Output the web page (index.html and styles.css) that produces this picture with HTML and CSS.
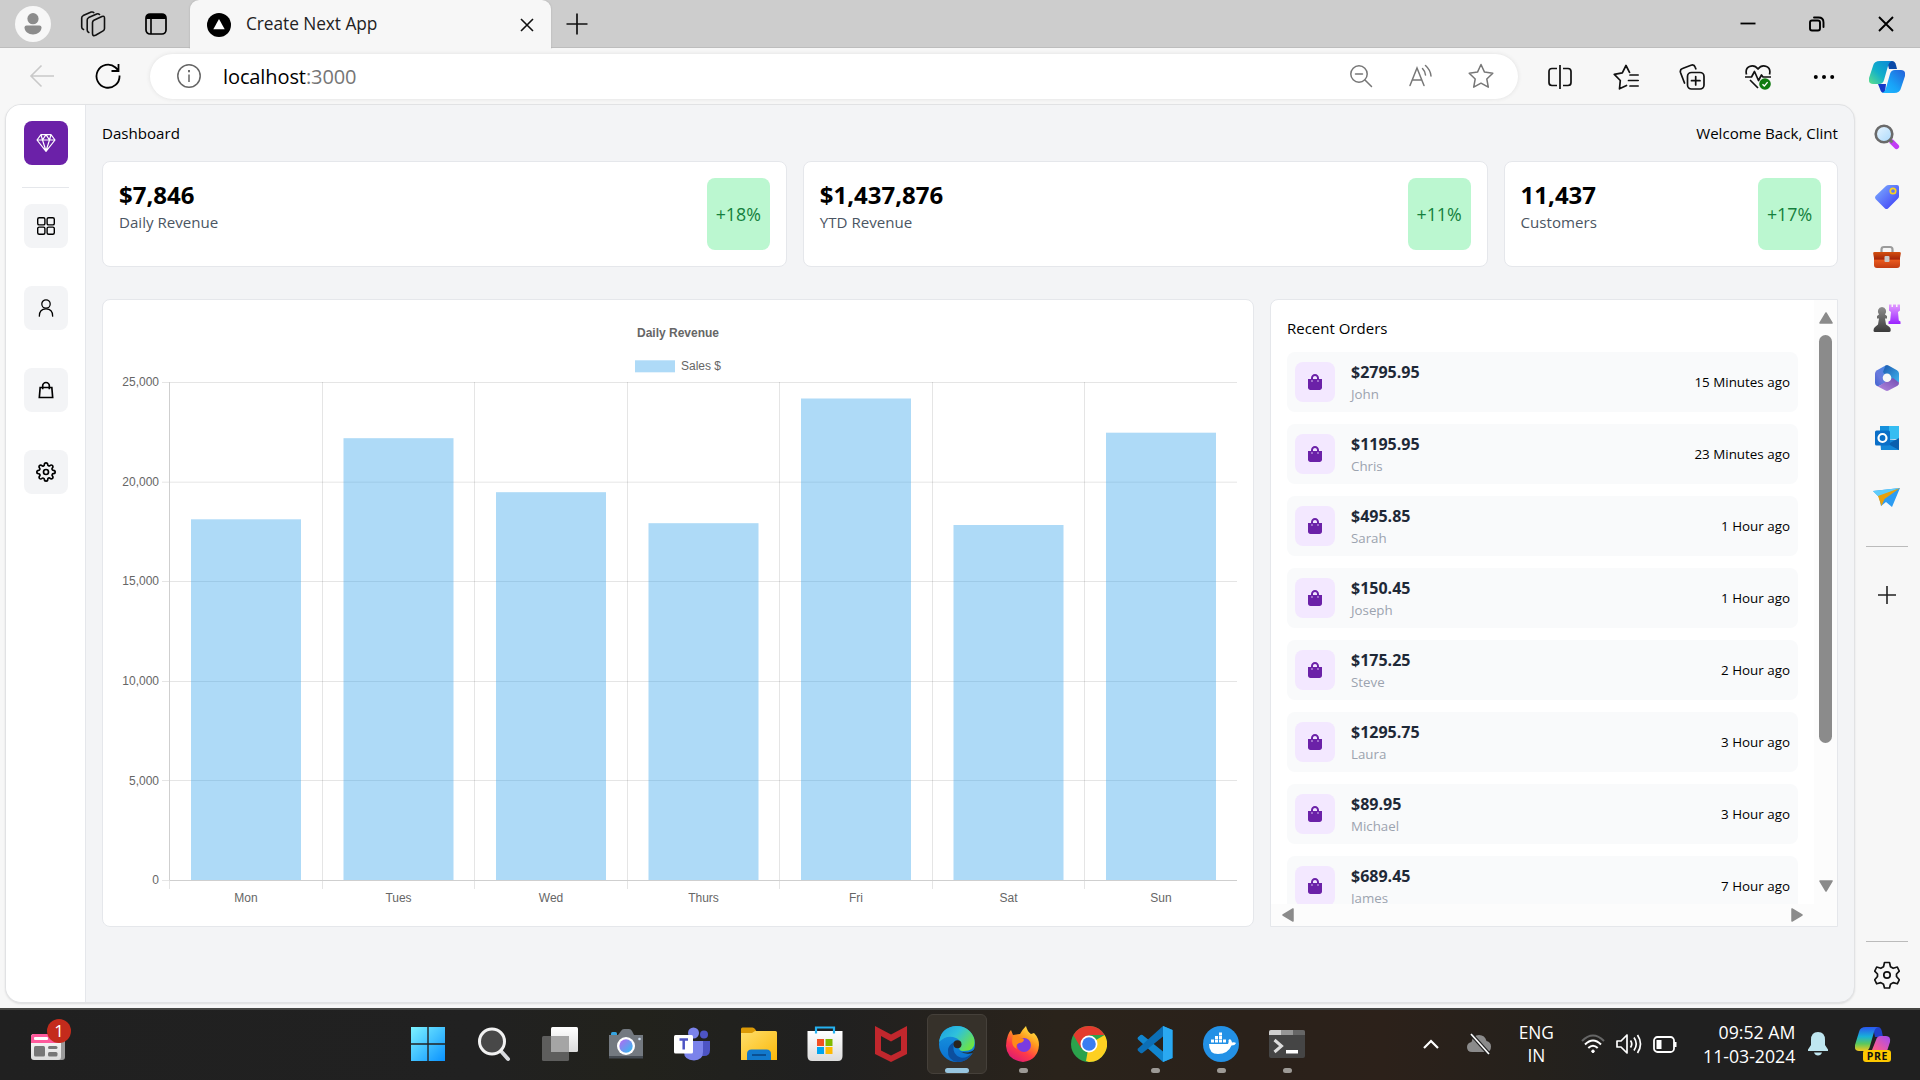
FILE: index.html
```html
<!DOCTYPE html>
<html lang="en">
<head>
<meta charset="utf-8">
<title>Create Next App</title>
<link rel="stylesheet" href="styles.css">
</head>
<body>
<svg class="defs" width="0" height="0" aria-hidden="true">
  <defs>
    <linearGradient id="cpA" x1="0" y1="1" x2="1" y2="0"><stop offset="0" stop-color="#5fe08a"/><stop offset=".45" stop-color="#12b0c9"/><stop offset="1" stop-color="#0a86d8"/></linearGradient>
    <linearGradient id="cpB" x1="1" y1="0" x2="0" y2="1"><stop offset="0" stop-color="#2560d8"/><stop offset=".6" stop-color="#18a4f8"/><stop offset="1" stop-color="#22b9ff"/></linearGradient>
    <linearGradient id="cpC" x1="0" y1="0" x2="0" y2="1"><stop offset="0" stop-color="#2a56f0"/><stop offset=".4" stop-color="#18b0d8"/><stop offset=".7" stop-color="#5cc85c"/><stop offset="1" stop-color="#f5c81e"/></linearGradient>
    <linearGradient id="cpD" x1="1" y1="0" x2="0" y2="1"><stop offset="0" stop-color="#a24bf5"/><stop offset=".6" stop-color="#f25a9a"/><stop offset="1" stop-color="#ff7a50"/></linearGradient>
    <linearGradient id="tagG" x1="0" y1="0" x2="1" y2="1"><stop offset="0" stop-color="#7fb2ff"/><stop offset="1" stop-color="#3b38f5"/></linearGradient>
    <linearGradient id="lensG" x1="0" y1="0" x2="1" y2="1"><stop offset="0" stop-color="#eaf6ff"/><stop offset="1" stop-color="#a9d8fb"/></linearGradient>
    <linearGradient id="boxG" x1="0" y1="0" x2="0" y2="1"><stop offset="0" stop-color="#d4500f"/><stop offset=".45" stop-color="#a5260a"/><stop offset=".5" stop-color="#ea5a1e"/><stop offset="1" stop-color="#c23c12"/></linearGradient>
    <linearGradient id="pawnG" x1="0" y1="0" x2="0" y2="1"><stop offset="0" stop-color="#8d8d8d"/><stop offset="1" stop-color="#3a3a3a"/></linearGradient>
    <linearGradient id="rookG" x1="0" y1="0" x2="0" y2="1"><stop offset="0" stop-color="#e29cff"/><stop offset="1" stop-color="#9a22ff"/></linearGradient>
    <linearGradient id="hexL" x1="1" y1="0" x2="0" y2="1"><stop offset="0" stop-color="#3f8de6"/><stop offset=".6" stop-color="#6a78dc"/><stop offset="1" stop-color="#3f63cf"/></linearGradient>
    <linearGradient id="hexR" x1="0" y1="0" x2="1" y2="1"><stop offset="0" stop-color="#1c58ae"/><stop offset="1" stop-color="#3fb4ee"/></linearGradient>
    <linearGradient id="hexB" x1="0" y1="1" x2="1" y2="0"><stop offset="0" stop-color="#b78ae0"/><stop offset="1" stop-color="#6f4bb0"/></linearGradient>
    <linearGradient id="winG" x1="0" y1="0" x2="1" y2="1"><stop offset="0" stop-color="#7df3ff"/><stop offset="1" stop-color="#0a92ff"/></linearGradient>
    <linearGradient id="folderG" x1="0" y1="0" x2="1" y2="1"><stop offset="0" stop-color="#ffdf6b"/><stop offset="1" stop-color="#fbb80a"/></linearGradient>
    <linearGradient id="edgeA" x1="0" y1="0" x2="1" y2=".6"><stop offset="0" stop-color="#1b9de2"/><stop offset=".5" stop-color="#2fc1dc"/><stop offset="1" stop-color="#6be24a"/></linearGradient>
    <linearGradient id="edgeB" x1="0" y1="0" x2="0" y2="1"><stop offset="0" stop-color="#1a9ae0"/><stop offset="1" stop-color="#0a6fd0"/></linearGradient>
    <linearGradient id="ffG" x1=".8" y1="0" x2=".2" y2="1"><stop offset="0" stop-color="#fff04a"/><stop offset=".35" stop-color="#ff9a1e"/><stop offset=".65" stop-color="#ff3b47"/><stop offset="1" stop-color="#d8157a"/></linearGradient>
    <linearGradient id="camG" x1="0" y1="0" x2="1" y2="1"><stop offset="0" stop-color="#b667f0"/><stop offset="1" stop-color="#2cc0f0"/></linearGradient>
    <linearGradient id="whiteG" x1="0" y1="0" x2="0" y2="1"><stop offset="0" stop-color="#fff"/><stop offset="1" stop-color="#dcdcdc"/></linearGradient>
  </defs>
  <symbol id="bag" viewBox="0 0 448 512"><path d="M352 160v-32C352 57.42 294.579 0 224 0 153.42 0 96 57.42 96 128v32H0v272c0 44.183 35.817 80 80 80h288c44.183 0 80-35.817 80-80V160h-96zm-192-32c0-35.29 28.71-64 64-64s64 28.71 64 64v32H160v-32zm160 120c-13.255 0-24-10.745-24-24s10.745-24 24-24 24 10.745 24 24-10.745 24-24 24zm-192 0c-13.255 0-24-10.745-24-24s10.745-24 24-24 24 10.745 24 24-10.745 24-24 24z"/></symbol>
</svg>

<div class="screen">
  <header class="tabstrip">
    <div class="profile"><svg width="36" height="36" viewBox="0 0 36 36"><circle cx="18" cy="18" r="18" fill="#f7f7f7"/><circle cx="18" cy="12.7" r="5.6" fill="#8c8c8c"/><path d="M9.5 21.5q0-2 2-2h13q2 0 2 2c0 4-4 7-8.500 7s-8.500-3-8.500-7z" fill="#8c8c8c"/></svg></div>
    <svg class="workspaces" width="26" height="26" viewBox="0 0 26 26" fill="none" stroke="#111" stroke-width="1.600" stroke-linecap="round" stroke-linejoin="round"><path d="M12.500 11.500q0-1.600 1.400-2.300l8-3.700q2.600-1 2.600 1.500v10.500q0 1.600-1.400 2.400l-7.500 4.300q-3.100 1.300-3.100-1.700z"/><path d="M8.800 21.500q-1.600-.6-1.600-2.400V9q0-1.600 1.500-2.400l8-3.600q1.700-.6 2.800.5M3.500 18.500q-1.800-.6-1.800-2.500V7q0-1.700 1.500-2.400l8-3.500q1.700-.5 2.500.5"/></svg>
    <svg class="tab-actions" width="22" height="22" viewBox="0 0 22 22"><rect x="1" y="1" width="20" height="20" rx="4" fill="none" stroke="#000" stroke-width="1.700"/><path d="M1 6V4.500Q1 1 4.500 1h13Q21 1 21 4.500V6z"/><path d="M6 6v15" stroke="#000" stroke-width="1.600"/></svg>
    <div class="tab">
      <svg width="24" height="24" viewBox="0 0 24 24"><circle cx="12" cy="12" r="12"/><path d="M12 6l5.700 10.200H6.300z" fill="#fff"/></svg>
      <span class="tab-title">Create Next App</span>
      <svg class="tab-close" width="14" height="14" viewBox="0 0 14 14" stroke="#111" stroke-width="1.600"><path d="M1 1l12 12M13 1L1 13"/></svg>
    </div>
    <svg class="new-tab" width="22" height="22" viewBox="0 0 22 22" stroke="#111" stroke-width="1.700"><path d="M11 .5v21M.5 11h21"/></svg>
    <div class="win-buttons">
      <svg width="18" height="18" viewBox="0 0 18 18" stroke="#000" stroke-width="1.800"><path d="M1.500 8.500h15"/></svg>
      <svg width="18" height="18" viewBox="0 0 18 18" fill="none" stroke="#000" stroke-width="1.900"><rect x="2" y="5.500" width="10" height="10" rx="2"/><path d="M6 2.500h4.500q5 0 5 5V12" stroke-linecap="round"/></svg>
      <svg width="18" height="18" viewBox="0 0 18 18" stroke="#000" stroke-width="1.900"><path d="M2 2l14 14M16 2L2 16"/></svg>
    </div>
  </header>

  <div class="toolbar">
    <div class="nav-cell"><svg width="26" height="24" viewBox="0 0 26 24" fill="none" stroke="#c9c9c9" stroke-width="1.600"><path d="M25 12H2M12.500 1.500L2 12l10.500 10.500"/></svg></div>
    <div class="nav-cell"><svg width="26" height="26" viewBox="0 0 26 26" fill="none" stroke="#000" stroke-width="1.800"><path d="M24.500 12.500A11.500 11.500 0 1 1 20.500 4.500L23.500 7.500M23.500 1v7h-7"/></svg></div>
    <div class="address">
      <svg class="info" width="24" height="24" viewBox="0 0 24 24" fill="none" stroke="#666" stroke-width="1.500"><circle cx="12" cy="12" r="11.200"/><path d="M12 10.500v7.500" /><path d="M12 6v2.200" stroke-width="1.900"/></svg>
      <span class="url">localhost<span class="port">:3000</span></span>
      <div class="address-icons">
        <svg width="24" height="24" viewBox="0 0 24 24" fill="none" stroke="#777" stroke-width="1.500" stroke-linecap="round"><circle cx="10" cy="10" r="8.200"/><path d="M16 16l6.500 6.500M6.500 10h7"/></svg>
        <svg width="26" height="24" viewBox="0 0 26 24" fill="none" stroke="#777" stroke-width="1.500" stroke-linecap="round"><path d="M2 21.500L9 4l7 17.500M4.500 16h9M14.500 4.500q2.500 2.500 3 6.500M17.500 1.500q5 4.500 5.500 10.500"/></svg>
        <svg width="26" height="26" viewBox="0 0 26 26" fill="none" stroke="#777" stroke-width="1.500" stroke-linejoin="round"><path d="M13 1.500l3.500 7.600 8.300 1.100-6 5.800 1.500 8.200L13 20.200l-7.300 4 1.500-8.200-6-5.800 8.300-1.100z"/></svg>
      </div>
    </div>
    <div class="tools">
      <svg width="24" height="24" viewBox="0 0 24 24" fill="none" stroke="#111" stroke-width="1.700"><path d="M12 0v24M9 3.500H4Q1 3.500 1 6.500v11q0 3 3 3h5M15 3.500h5q3 0 3 3v11q0 3-3 3h-5"/></svg>
      <svg width="26" height="26" viewBox="0 0 26 26" fill="none" stroke="#111" stroke-width="1.700" stroke-linejoin="round" stroke-linecap="round"><path d="M13.500 21.500L6.500 24.800l.8-8.300-6-6.100 8-1.500L13 1.500l3.500 6.800M17 11h8.200M15.500 16.500h9.700M17 22h8.200"/></svg>
      <svg width="26" height="26" viewBox="0 0 26 26" fill="none" stroke="#111" stroke-width="1.700" stroke-linecap="round"><rect x="8.500" y="8.500" width="16.500" height="16.500" rx="4"/><path d="M16.700 12.500v8.500M12.500 16.700H21M5.500 19L1.500 8.500q-.8-3 2-4L12 1.200q3.200-1 4.200 2l.6 1.600"/></svg>
      <svg width="26" height="26" viewBox="0 0 26 26" fill="none" stroke="#111" stroke-width="1.700" stroke-linejoin="round"><path d="M1.500 10.500Q0 4.500 4.500 2.500 9.500.5 13 5 16.500.5 21.500 2.500 26 4.500 24.500 10.500M0 13h6.500L9.500 7.500l4 9 3-5.500 1.500 2h8M5 16l8 8"/><circle cx="20" cy="20" r="5.800" fill="#107c10" stroke="none"/><path d="M17.500 20.300l1.800 1.800 3.300-4" stroke="#fff" stroke-width="1.400"/></svg>
      <svg width="22" height="6" viewBox="0 0 22 6"><circle cx="2.800" cy="3" r="2"/><circle cx="11" cy="3" r="2"/><circle cx="19.200" cy="3" r="2"/></svg>
    </div>
    <div class="copilot"><svg width="36" height="33" viewBox="0 0 36 33"><path d="M18 0h5q3 0 4 4l1 4h-8z" fill="#0a4aa8"/><path d="M9 23h8l-1 9h-1q-3 0-4-4z" fill="#1438c8"/><path d="M11 0h12q-3 1-4 5l-4 14q-1 4-5 4H4q-5 0-4-6L4 5q1-5 7-5z" fill="url(#cpA)"/><path d="M25 32H13q3-1 4-5l4-14q1-4 5-4h6q5 0 4 6l-4 12q-1 5-7 5z" fill="url(#cpB)"/></svg></div>
  </div>

  <div class="workarea">
    <div class="app">
      <nav class="sidenav">
        <div class="nav-btn brand"><svg width="20" height="20" viewBox="0 0 20 20" fill="none" stroke="#fff" stroke-width="1.200" stroke-linejoin="round"><path d="M5 1.700h10l4 5.300-9 11.300L1 7zM1 7h18M5 1.700L6.500 7 10 18l3.500-11L15 1.700M6.500 7L10 1.700 13.500 7"/></svg></div>
        <hr class="nav-rule">
        <div class="nav-btn"><svg width="20" height="20" viewBox="0 0 20 20" fill="none" stroke="#000" stroke-width="1.400"><rect x="1.700" y="1.700" width="7.200" height="7.200" rx="1.500"/><rect x="11.100" y="1.700" width="7.200" height="7.200" rx="1.500"/><rect x="1.700" y="11.100" width="7.200" height="7.200" rx="1.500"/><rect x="11.100" y="11.100" width="7.200" height="7.200" rx="1.500"/></svg></div>
        <div class="nav-btn"><svg width="20" height="20" viewBox="0 0 15 15" fill="none" stroke="#000" stroke-width=".95" stroke-linecap="round"><circle cx="7.500" cy="4.500" r="3.150"/><path d="M2.500 13.600C2.500 10 4.300 8.200 7.500 8.200s5 1.800 5 5.400"/></svg></div>
        <div class="nav-btn"><svg width="20" height="20" viewBox="0 0 24 24" fill="none" stroke="#000" stroke-width="2"><path d="M16 11V7a4 4 0 00-8 0v4M5 9h14l1 12H4L5 9z"/></svg></div>
        <div class="nav-btn"><svg width="20" height="20" viewBox="0 0 24 24" fill="none" stroke="#000" stroke-width="2" stroke-linecap="round" stroke-linejoin="round"><circle cx="12" cy="12" r="3"/><path d="M19.400 15a1.650 1.650 0 0 0 .33 1.820l.06.06a2 2 0 0 1 0 2.830 2 2 0 0 1-2.830 0l-.06-.06a1.650 1.650 0 0 0-1.820-.33 1.650 1.650 0 0 0-1 1.510V21a2 2 0 0 1-2 2 2 2 0 0 1-2-2v-.09A1.650 1.650 0 0 0 9 19.400a1.650 1.650 0 0 0-1.820.33l-.06.06a2 2 0 0 1-2.830 0 2 2 0 0 1 0-2.830l.06-.06a1.650 1.650 0 0 0 .33-1.820 1.650 1.650 0 0 0-1.510-1H3a2 2 0 0 1-2-2 2 2 0 0 1 2-2h.09A1.650 1.650 0 0 0 4.600 9a1.650 1.650 0 0 0-.33-1.820l-.06-.06a2 2 0 0 1 0-2.830 2 2 0 0 1 2.830 0l.06.06a1.650 1.650 0 0 0 1.820.33H9a1.650 1.650 0 0 0 1-1.510V3a2 2 0 0 1 2-2 2 2 0 0 1 2 2v.09a1.650 1.650 0 0 0 1 1.510 1.650 1.650 0 0 0 1.820-.33l.06-.06a2 2 0 0 1 2.830 0 2 2 0 0 1 0 2.830l-.06.06a1.650 1.650 0 0 0-.33 1.820V9a1.650 1.650 0 0 0 1.510 1H21a2 2 0 0 1 2 2 2 2 0 0 1-2 2h-.09a1.650 1.650 0 0 0-1.510 1z"/></svg></div>
      </nav>

      <main class="content">
        <div class="page-head"><span>Dashboard</span><span>Welcome Back, Clint</span></div>

        <section class="stats">
          <div class="card stat wide"><div><p class="stat-value">$7,846</p><p class="stat-label">Daily Revenue</p></div><p class="badge">+18%</p></div>
          <div class="card stat wide"><div><p class="stat-value">$1,437,876</p><p class="stat-label">YTD Revenue</p></div><p class="badge">+11%</p></div>
          <div class="card stat"><div><p class="stat-value">11,437</p><p class="stat-label">Customers</p></div><p class="badge">+17%</p></div>
        </section>

        <section class="panels">
          <div class="card chart-card">
            <svg class="chart" width="1150" height="625" viewBox="1 1 1150 625">
              <text class="chart-title" x="576" y="37.500">Daily Revenue</text>
              <rect class="bar" x="533" y="61.300" width="40" height="12"/>
              <text x="579" y="70.800">Sales $</text>
              <g class="grid">
                <path d="M60 83.500H1135M60 183.200H1135M60 282.500H1135M60 382.500H1135M60 481.500H1135M60 581.500H67"/>
                <path d="M67.500 582V590M220.500 83V590M372.500 83V590M525.500 83V590M677.500 83V590M830.500 83V590M982.500 83V590"/>
              </g>
              <g>
                <rect class="bar" x="89" y="220.300" width="110" height="361.200"/>
                <rect class="bar" x="241.500" y="139.200" width="110" height="442.300"/>
                <rect class="bar" x="394" y="193.200" width="110" height="388.300"/>
                <rect class="bar" x="546.500" y="224.200" width="110" height="357.300"/>
                <rect class="bar" x="699" y="99.500" width="110" height="482"/>
                <rect class="bar" x="851.500" y="226" width="110" height="355.500"/>
                <rect class="bar" x="1004" y="133.700" width="110" height="447.800"/>
              </g>
              <path class="axis" d="M67.500 83V581.500H1135"/>
              <g class="ylab">
                <text x="57" y="87">25,000</text><text x="57" y="186.500">20,000</text><text x="57" y="286">15,000</text><text x="57" y="386">10,000</text><text x="57" y="485.500">5,000</text><text x="57" y="585">0</text>
              </g>
              <g class="xlab">
                <text x="144" y="603">Mon</text><text x="296.500" y="603">Tues</text><text x="449" y="603">Wed</text><text x="601.500" y="603">Thurs</text><text x="754" y="603">Fri</text><text x="906.500" y="603">Sat</text><text x="1059" y="603">Sun</text>
              </g>
            </svg>
          </div>

          <div class="card orders-card">
            <div class="orders">
              <h1>Recent Orders</h1>
              <ul>
                <li><span class="bag"><svg><use href="#bag"/></svg></span><div><p class="price">$2795.95</p><p class="name">John</p></div><p class="ago">15 Minutes ago</p></li>
                <li><span class="bag"><svg><use href="#bag"/></svg></span><div><p class="price">$1195.95</p><p class="name">Chris</p></div><p class="ago">23 Minutes ago</p></li>
                <li><span class="bag"><svg><use href="#bag"/></svg></span><div><p class="price">$495.85</p><p class="name">Sarah</p></div><p class="ago">1 Hour ago</p></li>
                <li><span class="bag"><svg><use href="#bag"/></svg></span><div><p class="price">$150.45</p><p class="name">Joseph</p></div><p class="ago">1 Hour ago</p></li>
                <li><span class="bag"><svg><use href="#bag"/></svg></span><div><p class="price">$175.25</p><p class="name">Steve</p></div><p class="ago">2 Hour ago</p></li>
                <li><span class="bag"><svg><use href="#bag"/></svg></span><div><p class="price">$1295.75</p><p class="name">Laura</p></div><p class="ago">3 Hour ago</p></li>
                <li><span class="bag"><svg><use href="#bag"/></svg></span><div><p class="price">$89.95</p><p class="name">Michael</p></div><p class="ago">3 Hour ago</p></li>
                <li><span class="bag"><svg><use href="#bag"/></svg></span><div><p class="price">$689.45</p><p class="name">James</p></div><p class="ago">7 Hour ago</p></li>
              </ul>
            </div>
            <div class="vbar">
              <svg width="14" height="12" viewBox="0 0 14 12"><path d="M7 1L13 11H1z"/></svg>
              <div class="thumb"></div>
              <svg width="14" height="12" viewBox="0 0 14 12"><path d="M7 11L13 1H1z"/></svg>
            </div>
            <div class="hbar">
              <svg width="12" height="14" viewBox="0 0 12 14"><path d="M1 7L11 1v12z"/></svg>
              <svg width="12" height="14" viewBox="0 0 12 14"><path d="M11 7L1 1v12z"/></svg>
            </div>
          </div>
        </section>
      </main>
    </div>

    <aside class="edgebar">
      <div class="edge-cell"><svg width="26" height="26" viewBox="0 0 26 26"><path d="M18 18l4.500 4.500" stroke="#c23cf5" stroke-width="5.200" stroke-linecap="round"/><path d="M15.500 15.500l3 3" stroke="#777" stroke-width="3"/><circle cx="10" cy="10" r="8.300" fill="url(#lensG)" stroke="#6a6a6a" stroke-width="2.600"/></svg></div>
      <div class="edge-cell"><svg width="26" height="26" viewBox="0 0 26 26"><path d="M15 1h8q2 0 2 2v9q0 1.500-1 2.500L14 24.500q-1.500 1.200-3 0L1.500 15q-1-1.500 0-3L12 2q1-1 3-1z" fill="url(#tagG)"/><circle cx="19" cy="7" r="2.700" fill="none" stroke="#fcd21c" stroke-width="1.700"/></svg></div>
      <div class="edge-cell"><svg width="28" height="24" viewBox="0 0 28 24"><path d="M8.500 7V4.500q0-2.500 2.500-2.500h6q2.500 0 2.500 2.500V7" fill="none" stroke="#9b9b9b" stroke-width="2.200"/><path d="M1.500 7h25q1.500 0 1.300 1.500L27 13v7q0 3-3 3H4q-3 0-3-3v-7L.2 8.500Q0 7 1.500 7z" fill="url(#boxG)"/><rect x="11.500" y="11" width="5" height="6" rx="1" fill="#c9c9c9"/></svg></div>
      <div class="edge-cell"><svg width="28" height="28" viewBox="0 0 28 28"><path d="M16 .5h2.500V3H20V.5h3V3h1.500V.5H27v6l-2 1.500.8 8.500 1.700 1V20H15.500v-2.500l1.700-1L18 8l-2-1.500z" fill="url(#rookG)"/><path d="M9 3a4.500 4.500 0 0 1 3 7.500l2 1.500v2.500h-2l1 6 3.500 2.500q1.500 1 1.200 3.500Q17.500 28 16 28H2Q.5 28 .5 26.500.5 24 2 23l3-2.500 1-6H4V12l2-1.500A4.500 4.500 0 0 1 9 3z" fill="url(#pawnG)"/></svg></div>
      <div class="edge-cell"><svg width="26" height="28" viewBox="0 0 26 28"><path d="M11.500 1.500L3 6.200Q1 7.400 1 9.500v9.300q0 2 1.500 3 1.500.7 3 0L13 18V3z" fill="url(#hexL)"/><path d="M11.500 1.500q1.500-.9 3 0L23 6.200q2 1.200 2 3.300v9L13 13 9 8z" fill="url(#hexR)"/><path d="M2.500 21.800q1.500.7 3 0L13 17l6-3 6 4.500q.2 2.300-1.500 3.300L14.500 26.500q-1.500.9-3 0z" fill="url(#hexB)"/><circle cx="13" cy="13.800" r="4.300" fill="#f7f7f7"/></svg></div>
      <div class="edge-cell"><svg width="26" height="26" viewBox="0 0 26 26"><rect x="6" y="1" width="19" height="13" fill="#35bdf2"/><path d="M6 1h9v6H6z" fill="#1690dc"/><path d="M6 14l19 1v10H7z" fill="#1487d8"/><path d="M25 13v12L14 19z" fill="#0b5fae"/><rect x="1" y="5.500" width="15" height="15" rx="1.500" fill="#0a6fc8"/><circle cx="8.500" cy="13" r="4" fill="none" stroke="#fff" stroke-width="2.200"/></svg></div>
      <div class="edge-cell"><svg width="28" height="22" viewBox="0 0 28 22"><path d="M0 4L27 1 19 20l-6-5-5 4-2-9z" fill="#2c9cf2"/><path d="M0 4L27 1 6 10z" fill="#5fcdfb"/><path d="M27 1L5 9l3.500 10 3-7z" fill="#e8a00c"/></svg></div>
      <hr>
      <div class="edge-cell plus"><svg width="20" height="20" viewBox="0 0 20 20" stroke="#222" stroke-width="1.600"><path d="M10 1v18M1 10h18"/></svg></div>
      <div class="edge-bottom">
        <hr>
        <svg width="26" height="28" viewBox="0 0 26 28" fill="none" stroke="#111" stroke-width="1.700" stroke-linejoin="round"><path d="M10.500 1.500h5l1 4.200 2.700 1.600 4.100-1.300 2 4.200-2.800 2.800v2.500l2.800 3.300-2 4-4.100-1.200-2.700 1.700-1 3.700h-5l-1-3.700-2.700-1.700-4.100 1.200-2-4 2.800-3.300V13L.7 10.200l2-4.200 4.100 1.300 2.700-1.600z"/><circle cx="13" cy="14" r="3.200"/></svg>
      </div>
    </aside>
  </div>

  <footer class="taskbar">
    <div class="widgets"><svg width="42" height="44" viewBox="0 0 42 44"><path d="M28 18h4q3 0 3 3v16q0 3-3 3h-4z" fill="#9a9a9a"/><rect x="1" y="14" width="30" height="26" rx="3" fill="url(#whiteG)"/><path d="M1 23v-6q0-3 3-3h27v9z" fill="#ff5a9c"/><rect x="4" y="17" width="14" height="3" rx="1" fill="#fff"/><rect x="4" y="26" width="11" height="10.500" rx="1.500" fill="#777"/><rect x="18" y="26" width="9.500" height="3" rx="1.500" fill="#777"/><rect x="18" y="32" width="9.500" height="4.500" rx="1.500" fill="#777"/></svg><span class="notif">1</span></div>
    <div class="apps">
      <div class="app-cell"><svg width="36" height="36" viewBox="0 0 36 36"><path d="M1 1h16.300v16.300H1zM18.700 1H35v16.300H18.700zM1 18.700h16.300V35H1zM18.700 18.700H35V35H18.700z" fill="url(#winG)"/></svg></div>
      <div class="app-cell"><svg width="36" height="36" viewBox="0 0 36 36"><path d="M24 24l8 9" stroke="#d8dade" stroke-width="4" stroke-linecap="round"/><circle cx="16" cy="15.500" r="12.500" fill="#484848" stroke="#f2f2f2" stroke-width="3"/></svg></div>
      <div class="app-cell"><svg width="38" height="36" viewBox="0 0 38 36"><rect x="10" y="1" width="27" height="25" rx="1.500" fill="url(#whiteG)"/><rect x="1" y="10" width="27" height="25" rx="1.500" fill="#696969" opacity=".85"/><path d="M10 10h18v16H10z" fill="#a5a5a5"/></svg></div>
      <div class="app-cell"><svg width="38" height="34" viewBox="0 0 38 34"><rect x="4" y="5" width="6" height="4" rx="1.500" fill="#36a4e0"/><path d="M2 8h9l3-4q1-2 3-2h5q2 0 3 2l2 4h9v23H2z" fill="#737980"/><path d="M2 29h34v2.500H2z" fill="#454b52"/><circle cx="19" cy="19" r="9" fill="#fff"/><circle cx="19" cy="19" r="6.700" fill="url(#camG)"/><circle cx="32.500" cy="12" r="1.300" fill="#cde"/></svg></div>
      <div class="app-cell"><svg width="38" height="36" viewBox="0 0 38 36"><circle cx="31" cy="8.500" r="4" fill="#4d54c4"/><path d="M26 15h11v9q0 6-6 6h-5z" fill="#4d54c4"/><circle cx="20.500" cy="7" r="5.500" fill="#7b83eb"/><path d="M11 15h19v11q0 8-9 8.500-10-.5-10-8.500z" fill="#7b83eb"/><rect x="1" y="9" width="19" height="18.500" rx="1.500" fill="#fff"/><path d="M6.500 13.500H15M10.700 13.500v10" stroke="#4d54c4" stroke-width="2.500"/></svg></div>
      <div class="app-cell"><svg width="38" height="36" viewBox="0 0 38 36"><path d="M1 3q0-1.500 1.500-1.500h10q1.500 0 2.500 1.500l2 3-4 4H1z" fill="#dc9a06"/><path d="M1 7h11l3-2h20.500Q37 5 37 6.500V34H1z" fill="url(#folderG)"/><path d="M7 34v-6q0-4.500 4.500-4.500h15q4.500 0 4.500 4.500v6z" fill="#1279cc"/><path d="M12 29h14" stroke="#0a4f92" stroke-width="2"/></svg></div>
      <div class="app-cell"><svg width="36" height="36" viewBox="0 0 36 36"><path d="M9 6V1.500h18V6" fill="none" stroke="#25b1f0" stroke-width="2.200"/><path d="M.5 5h35v25q0 5-4.500 5H5Q.5 35 .5 30z" fill="url(#whiteG)"/><path d="M9 5v2.500M27 5v2.500" stroke="#25b1f0" stroke-width="2.200"/><path d="M10 13h7v7h-7z" fill="#f25022"/><path d="M18.500 13h7v7h-7z" fill="#7fba00"/><path d="M10 21h7v7h-7z" fill="#00a4ef"/><path d="M18.500 21h7v7h-7z" fill="#ffb900"/></svg></div>
      <div class="app-cell"><svg width="32" height="36" viewBox="0 0 32 36"><path d="M0 0l16 8.500L32 0v28l-16 8-16-8zM6 10v14.500l10 5 10-5V10l-10 5.500z" fill="#c1272d" fill-rule="evenodd"/></svg></div>
      <div class="app-cell active"><svg width="36" height="36" viewBox="0 0 36 36"><circle cx="18" cy="18" r="18" fill="url(#edgeB)"/><path d="M14.500 20q-1 9 7 11.500 6 1.500 12-5Q29 36 18.500 36 8 34 9 24q.5-5 6-8z" fill="#0c4f9e"/><path d="M0 16Q2 1 17 0q13 0 18 12 3 13-10 13-6 0-4.500-4 3-6-3.500-9Q8 8 0 16z" fill="url(#edgeA)"/><path d="M20 25q4 2 9 1.500 6-1 7-5 0 3-2.500 5.500-7 2-13.500-2z" fill="#2a251c"/><circle cx="18.500" cy="18.300" r="4" fill="#29241c"/></svg><i class="run on"></i></div>
      <div class="app-cell"><svg width="36" height="36" viewBox="0 0 36 36"><path d="M3 9q1-3 3-5l2 5 7-1q2-4 6-8 1 5 5 8l3-1q5 5 5 12-1 15-16 17Q2 34 1 20 1 14 3 9z" fill="url(#ffG)"/><circle cx="19" cy="19" r="7" fill="#7a3be0"/><path d="M8 9q5 0 7 3 4 0 4 2-1 3-5 3-4 2-2 6-7-3-4-14z" fill="#ff8a1a"/></svg><i class="run"></i></div>
      <div class="app-cell"><svg width="36" height="36" viewBox="0 0 36 36"><circle cx="18" cy="18" r="18" fill="#2ba24c"/><path d="M18 18L33.600 9A18 18 0 0 1 18 36l-3-1z" fill="#fdd022"/><path d="M2.400 9A18 18 0 0 1 33.600 9H18l-7.800 13.500z" fill="#e33b2e"/><path d="M25.800 22.500L18 36l-1-4z" fill="#fdd022"/><circle cx="18" cy="18" r="8.500" fill="#fff"/><circle cx="18" cy="18" r="6.800" fill="#3a7df0"/></svg></div>
      <div class="app-cell"><svg width="36" height="36" viewBox="0 0 36 36"><path d="M26 0l9.500 4v28L26 36 1 13.500q-1-1.200 0-2.200L3.500 9q1-.7 2 0L26 25.500z" fill="#1186cf"/><path d="M26 0L1 22.500q-1 1.200 0 2.200L3.500 27q1 .7 2 0L26 10.500z" fill="#0c6fb6"/><path d="M26 0l9.500 4v28L26 36z" fill="#2aa9f2"/></svg><i class="run"></i></div>
      <div class="app-cell"><svg width="36" height="36" viewBox="0 0 36 36"><circle cx="18" cy="18" r="18" fill="#2391e6"/><path d="M6 18h19q1-2 .5-4l1.500-1q2 1.500 2 3.500 2.500-.7 4 .5-1 2.500-4.500 2.500Q25 28 15 28q-9 0-9-10z" fill="#fff"/><path d="M8 13.500h3v3H8zM12 13.500h3v3h-3zM16 13.500h3v3h-3zM20 13.500h3v3h-3zM12 10h3v3h-3zM16 10h3v3h-3zM16 6.500h3v3h-3z" fill="#fff"/></svg><i class="run"></i></div>
      <div class="app-cell"><svg width="36" height="28" viewBox="0 0 36 28"><rect width="36" height="28" rx="2" fill="#454545"/><path d="M0 5V2q0-2 2-2h10v5z" fill="#d0d0d0"/><path d="M12 0h12v5H12z" fill="#969696"/><path d="M24 0h10q2 0 2 2v3H24z" fill="#666"/><path d="M5.500 10l7 6-7 6" fill="none" stroke="#ddd" stroke-width="3"/><rect x="17" y="20" width="12" height="3.500" fill="#fff"/></svg><i class="run"></i></div>
    </div>
    <div class="tray">
      <svg class="chev" width="16" height="10" viewBox="0 0 16 10" fill="none" stroke="#fff" stroke-width="2.200"><path d="M1 9l7-7 7 7"/></svg>
      <svg class="cloud" width="26" height="22" viewBox="0 0 26 22"><path d="M6 19q-5 0-5-5 0-4 4.500-5Q7 2 13 2t7.500 6Q25 9 25 13.500q0 5.500-5 5.500z" fill="#8b8b8b"/><path d="M5 1l18 20" stroke="#222" stroke-width="4"/><path d="M5 1l18 20" stroke="#fff" stroke-width="1.700"/></svg>
      <div class="lang">ENG<br>IN</div>
      <svg class="wifi" width="24" height="20" viewBox="0 0 24 20" fill="none" stroke="#fff" stroke-width="2"><path d="M1 7q11-11 22 0" stroke="#666"/><path d="M4 10.500q8-8 16 0M7.300 14q4.700-4.500 9.400 0"/><circle cx="12" cy="17.300" r="1.300" fill="#fff" stroke-width="1"/></svg>
      <svg class="sound" width="26" height="22" viewBox="0 0 26 22" fill="none" stroke="#fff" stroke-width="1.700" stroke-linejoin="round"><path d="M1 8h4l6-6v18l-6-6H1zM14.500 7.500q2.500 3.500 0 7M18 4.500q4.500 6.500 0 13M21.500 2q6 9 0 18"/></svg>
      <svg class="battery" width="25" height="17" viewBox="0 0 25 17"><rect x="1" y="1" width="20" height="15" rx="3.500" fill="none" stroke="#fff" stroke-width="1.800"/><rect x="3.500" y="4" width="5" height="9" fill="#fff"/><path d="M21 6h2.500v5H21z" fill="#fff"/></svg>
      <div class="clock">09:52 AM<br>11-03-2024</div>
      <svg class="bell" width="20" height="24" viewBox="0 0 20 24"><path d="M10 0q7 0 7 8v5l3 4.500v1.500H0v-1.500L3 13V8q0-8 7-8zM6 20.500h8q-1 3-4 3t-4-3z" fill="#bfe6f0"/></svg>
      <div class="pre-copilot"><svg width="36" height="36" viewBox="0 0 36 36"><path d="M18 1h5q3 0 4 5l1 5h-8z" fill="#2040c8"/><path d="M11 1h12q-3 1-4 5l-4 14q-1 5-5 5H4q-5 0-4-6L4 6q1-5 7-5z" fill="url(#cpC)"/><path d="M23 29H12q4-1 5-5l4-10q1-4 5-4h5q5 0 4 6l-3 9q-1 4-9 4z" fill="url(#cpD)"/></svg><span class="pre">PRE</span></div>
    </div>
  </footer>
</div>
</body>
</html>
```
FILE: styles.css
```css
* { box-sizing: border-box; margin: 0; padding: 0; }
body { width: 1920px; height: 1080px; overflow: hidden; font-family: "Open Sans", "Noto Sans", sans-serif; font-size: 15.100px; color: #000; background: #f7f7f7; }
svg { display: block; flex: none; }
.defs { position: absolute; }
hr { border: 0; }
.screen { display: grid; grid-template-rows: 48px 56px 904px 72px; height: 1080px; }

/* Tab strip */
.tabstrip { display: flex; align-items: center; background: #cdcdcd; border-bottom: 1px solid #bdbdbd; padding-left: 15px; }
.workspaces { margin-left: 29px; }
.tab-actions { margin-left: 39px; margin-right: 23px; }
.tab { display: flex; align-items: center; width: 361px; height: 49px; padding: 0 17px; background: #f7f7f7; border-radius: 9px 9px 0 0; box-shadow: 0 0 2px #aaa; clip-path: inset(0 -3px 0 -3px); align-self: flex-start; }
.tab-title { margin-left: 15px; margin-top: -2px; font-size: 17.300px; letter-spacing: -.05px; color: #222; }
.tab-close { margin-left: auto; }
.new-tab { margin-left: 15px; }
.win-buttons { display: grid; grid-template-columns: repeat(3, 69px); justify-items: center; margin-left: auto; }

/* Toolbar */
.toolbar { display: flex; align-items: center; background: #f7f7f7; }
.nav-cell { display: flex; justify-content: center; width: 66px; }
.nav-cell:first-child { margin-left: 9px; }
.address { display: flex; align-items: center; width: 1368px; height: 45px; margin: 0 9px 0 9px; padding: 0 12px 0 27px; border-radius: 23px; background: #fff; box-shadow: 0 0 4px #e0e0e0; }
.url { margin-left: 22px; font-size: 20px; letter-spacing: -.1px; }
.port { color: #767676; }
.address-icons { display: grid; grid-template-columns: repeat(3, 60px); justify-items: center; align-items: center; margin-left: auto; margin-right: -5px; }
.tools { display: grid; grid-template-columns: repeat(5, 66px); justify-items: center; align-items: center; padding-top: 1px; }
.copilot { display: flex; justify-content: center; width: 60px; padding-top: 2px; }

/* Page viewport */
.workarea { display: grid; grid-template-columns: 1855px 63px; background: #f7f7f7; }
.app { display: flex; height: 899px; margin-left: 5px; border: 1px solid #e1e2e4; border-radius: 16px; overflow: hidden; background: #f3f4f6; box-shadow: 0 1px 2px #ddd; }
.sidenav { display: flex; flex-direction: column; align-items: center; width: 80px; padding-top: 16px; background: #fff; border-right: 1px solid #e5e7eb; }
.nav-btn { display: grid; place-items: center; width: 44px; height: 44px; border-radius: 8px; background: #f3f4f6; margin-bottom: 38px; }
.brand { background: #6b21a8; margin-bottom: 22px; }
.nav-rule { width: 47px; border-top: 1px solid #e5e7eb; margin-bottom: 16px; }
.content { flex: 1; padding: 0 16px; }
.page-head { display: flex; justify-content: space-between; align-items: center; height: 56px; }
.card { background: #fff; border: 1px solid #e5e7eb; border-radius: 8px; }
.stats { display: grid; grid-template-columns: repeat(5, 1fr); gap: 16px; }
.stat { display: flex; justify-content: space-between; height: 106px; padding: 16px; }
.wide { grid-column: span 2; }
.stat-value { font-size: 24px; line-height: 34px; font-weight: 700; }
.stat-label { line-height: 20px; color: #4b5563; }
.badge { display: grid; place-items: center; width: 63px; font-size: 17.800px; border-radius: 8px; background: #bbf7d0; color: #15803d; }
.panels { display: grid; grid-template-columns: 1152px 568px; gap: 16px; height: 628px; margin-top: 32px; }

/* Chart */
.chart text { font: 12px "Liberation Sans", Arial, sans-serif; fill: #666; }
.chart .chart-title { font-weight: 700; text-anchor: middle; }
.bar { fill: rgba(53, 162, 235, .4); }
.grid path { fill: none; stroke: rgba(0, 0, 0, .1); }
.axis { fill: none; stroke: #cfcfcf; }
.ylab { text-anchor: end; }
.xlab { text-anchor: middle; }

/* Orders */
.orders-card { display: grid; grid-template: 604px 22px / 1fr 23px; border-radius: 8px 0 0 0; overflow: hidden; }
.orders { padding: 16px 16px 0; overflow: hidden; }
.orders h1 { font-size: 15px; font-weight: 400; line-height: 24px; }
.orders ul { list-style: none; margin-top: 12px; }
.orders li { display: flex; align-items: center; height: 60px; margin-bottom: 12px; padding: 8px; border-radius: 8px; background: #f9fafb; }
.bag { display: grid; place-items: center; width: 40px; height: 40px; margin-right: 16px; border-radius: 8px; background: #f3e8ff; }
.bag svg { width: 14px; height: 16px; fill: #6b21a8; }
.price { font-size: 16px; line-height: 24px; font-weight: 700; color: #1f2937; }
.name { font-size: 13.300px; line-height: 20px; color: #9ca3af; }
.ago { margin-left: auto; font-size: 13.400px; }
.vbar { display: flex; flex-direction: column; align-items: center; padding: 12px 0 12px; background: #fcfcfc; }
.thumb { width: 13px; height: 408px; margin: 11px 0 auto; border-radius: 7px; background: #8b8b8b; }
.vbar path, .hbar path { fill: #8b8b8b; stroke: #8b8b8b; stroke-linejoin: round; stroke-width: 1.500; }
.hbar { grid-column: span 2; display: flex; justify-content: space-between; align-items: center; padding: 0 34px 0 11px; background: #fcfcfc; }

/* Edge side bar */
.edgebar { display: flex; flex-direction: column; align-items: center; padding-top: 3px; }
.edge-cell { display: grid; place-items: center; height: 60.200px; width: 60px; }
.edgebar hr { width: 42px; border-top: 1px solid #bbb; }
.edge-cell + hr { margin-top: 18px; }
.plus { margin-top: 18px; }
.edge-bottom { display: flex; flex-direction: column; align-items: center; gap: 19px; margin-top: auto; margin-bottom: 19px; }

/* Taskbar */
.taskbar { display: flex; align-items: center; padding-bottom: 2px; border-top: 2px solid #464644; background: linear-gradient(90deg, #202020 0, #212121 25%, #22221c 33%, #202020 43%, #2a231b 55%, #2a211a 65%, #2c211a 72%, #25211c 80%, #202020 85%, #202020 100%); color: #fff; }
.widgets { position: relative; width: 44px; margin-left: 30px; margin-top: -4px; }
.notif { position: absolute; left: 17px; top: -1px; width: 24px; height: 28px; border-radius: 50%; background: #c42b1c; font-size: 17px; line-height: 27px; text-align: center; height: 24px; line-height: 23px; }
.apps { display: grid; grid-template-columns: repeat(14, 66.100px); margin-left: 321px; }
.app-cell { position: relative; display: grid; place-items: center; justify-self: center; width: 60px; height: 60px; }
.active { border: 1px solid #45403a; border-radius: 6px; background: #36312a; }
.run { position: absolute; bottom: 1px; left: 26px; width: 9px; height: 5px; border-radius: 3px; background: #9d9a96; }
.run.on { left: 17px; bottom: 0; width: 24px; background: #98c6e0; }
.tray { display: flex; align-items: center; flex: 1; font-size: 17.300px; line-height: 23px; }
.chev { margin-left: 103px; }
.cloud { margin-left: 27px; }
.lang { width: 44px; margin-left: 22px; text-align: center; }
.wifi { margin-left: 23px; }
.sound { margin-left: 11px; }
.battery { margin-left: 11px; }
.clock { width: 108px; margin-left: 9px; text-align: right; font-size: 17.700px; line-height: 24px; }
.bell { margin-left: 13px; }
.pre-copilot { position: relative; margin-left: 27px; }
.pre { position: absolute; left: 8px; top: 24px; width: 28px; height: 12px; border-radius: 3px; background: #fdc800; color: #111; font-size: 10.500px; font-weight: 700; line-height: 12px; text-align: center; letter-spacing: .5px; }
```
